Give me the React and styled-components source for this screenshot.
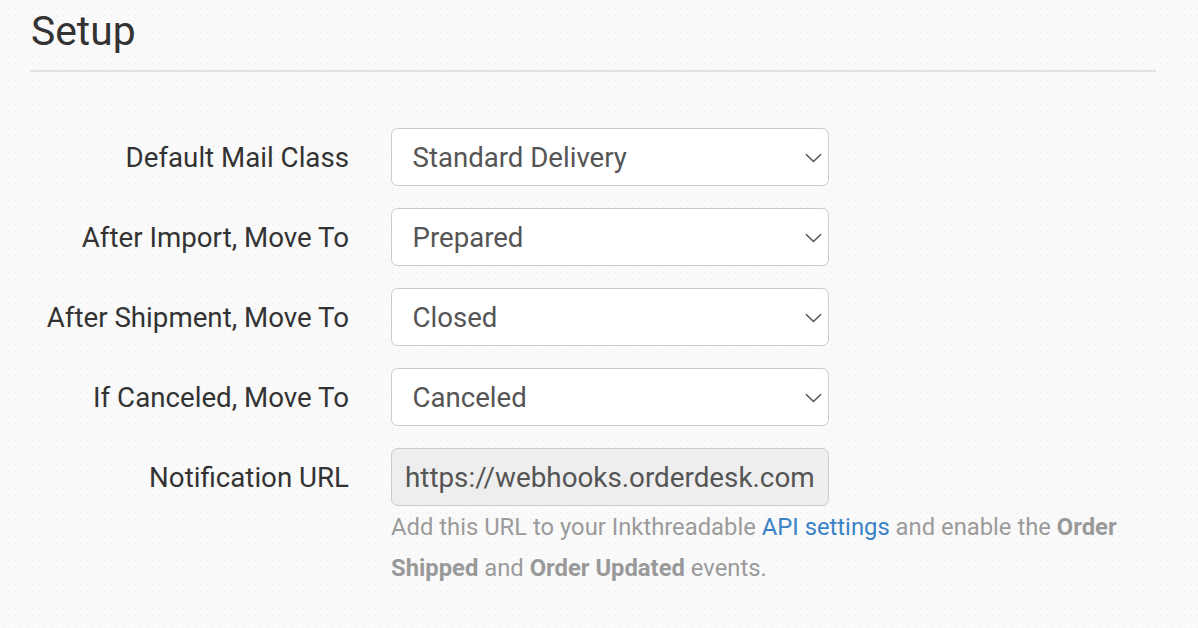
import React from 'react';
import styled, { createGlobalStyle } from 'styled-components';

const GlobalStyle = createGlobalStyle`
  html, body {
    margin: 0;
    padding: 0;
    background: #fafafa;
  }
  body {
    font-family: Roboto, "Liberation Sans", Arial, sans-serif;
    color: #333;
  }
`;

const Page = styled.div`
  width: 1198px;
  min-height: 628px;
  box-sizing: border-box;
  padding: 9px 42px 0 30px;
  background-color: #fafafa;
  background-image: radial-gradient(rgba(0, 0, 0, 0.018) 1px, transparent 1.4px);
  background-size: 6px 6px;
`;

const Heading = styled.h3`
  margin: 0;
  padding: 0 0 16px 1px;
  font-size: 40.8px;
  line-height: 1.1;
  font-weight: 400;
  color: #333;
  border-bottom: 2px solid #e2e2e2;
`;

const Form = styled.div`
  display: grid;
  grid-template-columns: 319px 1fr;
  column-gap: 42px;
  row-gap: 22px;
  padding-top: 56px;
  align-items: center;
`;

const Label = styled.label`
  text-align: right;
  font-size: 27.7px;
  color: #333;
  line-height: 1;
  padding-top: ${props => props.top || 2}px;
  align-self: ${props => (props.top ? 'start' : 'center')};
`;

const Field = styled.div`
  display: flex;
  flex-direction: column;
`;

const SelectWrap = styled.div`
  position: relative;
  width: 438px;
`;

const Select = styled.select`
  appearance: none;
  -webkit-appearance: none;
  width: 100%;
  height: 58px;
  box-sizing: border-box;
  margin: 0;
  padding: 2px 40px 0 20.5px;
  border: 1px solid #cbcbcb;
  border-radius: 6.5px;
  background: #fff;
  font-family: inherit;
  font-size: 27.6px;
  color: #555;
  outline: none;
`;

const Chevron = styled.svg`
  position: absolute;
  right: 7px;
  top: 25px;
  width: 17px;
  height: 10px;
  pointer-events: none;
`;

const Input = styled.input`
  width: 438px;
  height: 58px;
  box-sizing: border-box;
  margin: 0;
  padding: 1px 10px 0 13px;
  border: 1px solid #cbcbcb;
  border-radius: 6.5px;
  background: #eee;
  font-family: inherit;
  font-size: 27.8px;
  color: #555;
  outline: none;
`;

const Help = styled.p`
  margin: 1px 0 0;
  font-size: 23.8px;
  line-height: 41px;
  color: #9b9b9b;
  b {
    font-weight: 700;
    color: #999;
  }
  a {
    color: #3a82c6;
    text-decoration: none;
  }
`;

const DropDown = ({ value }) => (
  <SelectWrap>
    <Select defaultValue={value}>
      <option>{value}</option>
    </Select>
    <Chevron viewBox="0 0 17 10">
      <path d="M1 1.2 L8.5 8.5 L16 1.2" fill="none" stroke="#555" strokeWidth="1.6" />
    </Chevron>
  </SelectWrap>
);

const rows = [
  ['Default Mail Class', 'Standard Delivery'],
  ['After Import, Move To', 'Prepared'],
  ['After Shipment, Move To', 'Closed'],
  ['If Canceled, Move To', 'Canceled'],
];

const App = () => (
  <Page>
    <GlobalStyle />
    <Heading>Setup</Heading>
    <Form>
      {rows.map(([label, value]) => (
        <React.Fragment key={label}>
          <Label>{label}</Label>
          <Field>
            <DropDown value={value} />
          </Field>
        </React.Fragment>
      ))}
      <Label top={16}>Notification URL</Label>
      <Field>
        <Input readOnly value="https://webhooks.orderdesk.com" />
        <Help>
          Add this URL to your Inkthreadable <a href="#">API settings</a> and enable the{' '}
          <b>Order Shipped</b> and <b>Order Updated</b> events.
        </Help>
      </Field>
    </Form>
  </Page>
);

export default App;
